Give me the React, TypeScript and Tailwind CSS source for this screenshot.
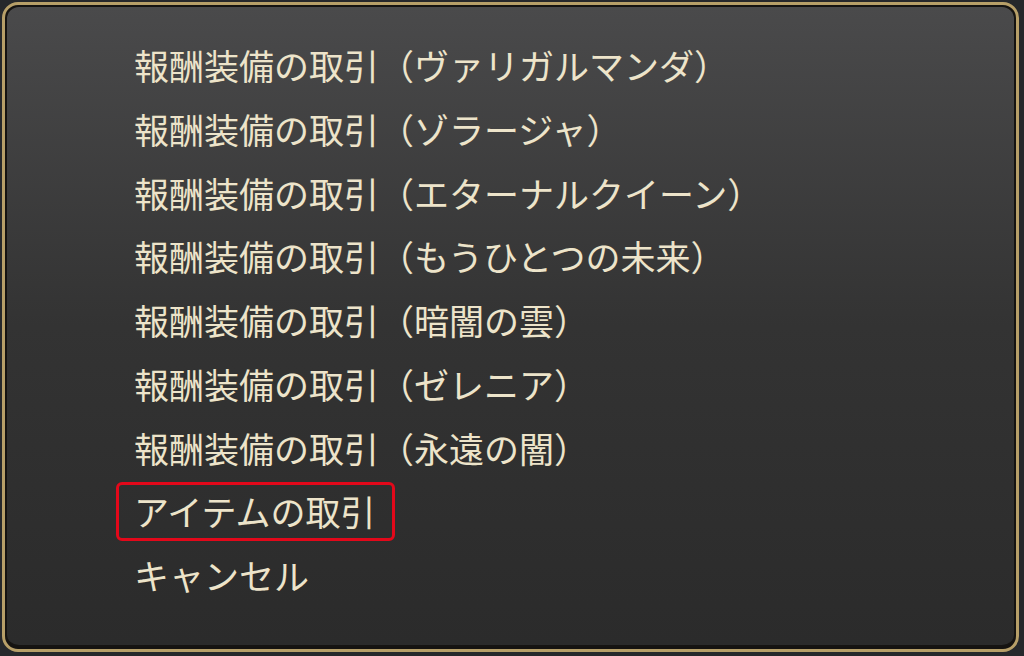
import React from 'react';

const items = [
  '報酬装備の取引（ヴァリガルマンダ）',
  '報酬装備の取引（ゾラージャ）',
  '報酬装備の取引（エターナルクイーン）',
  '報酬装備の取引（もうひとつの未来）',
  '報酬装備の取引（暗闇の雲）',
  '報酬装備の取引（ゼレニア）',
  '報酬装備の取引（永遠の闇）',
  'アイテムの取引',
  'キャンセル',
];

const App: React.FC = () => {
  return (
    <div className="w-[1024px] h-[656px] bg-[#26282b] p-[2px] overflow-hidden">
      {/* gold frame */}
      <div className="w-[1017px] h-[650px] rounded-[16px] border-[3px] border-[#b79f68] bg-[#151311] p-[2px]">
        <div className="w-full h-full rounded-[12px] bg-gradient-to-b from-[#4a4a4b] via-[#333333] to-[#2b2b2b] border-b-[2px] border-[#161412]">
          <ul
            className="pt-[26px] pl-[109px] flex flex-col text-[#ede4ca] text-[35px] leading-[64px]"
            style={{ fontFamily: '"Noto Sans CJK JP", "Noto Sans", sans-serif' }}
          >
            {items.map((label, i) => (
              <li key={i} className="h-[63.8px] flex items-center">
                {i === 7 ? (
                  <span className="h-[59px] flex items-center pl-[15px] pr-[16px] border-[3px] border-[#e3081a] rounded-[6px]">
                    {label}
                  </span>
                ) : (
                  <span className="pl-[18px]">{label}</span>
                )}
              </li>
            ))}
          </ul>
        </div>
      </div>
    </div>
  );
};

export default App;
